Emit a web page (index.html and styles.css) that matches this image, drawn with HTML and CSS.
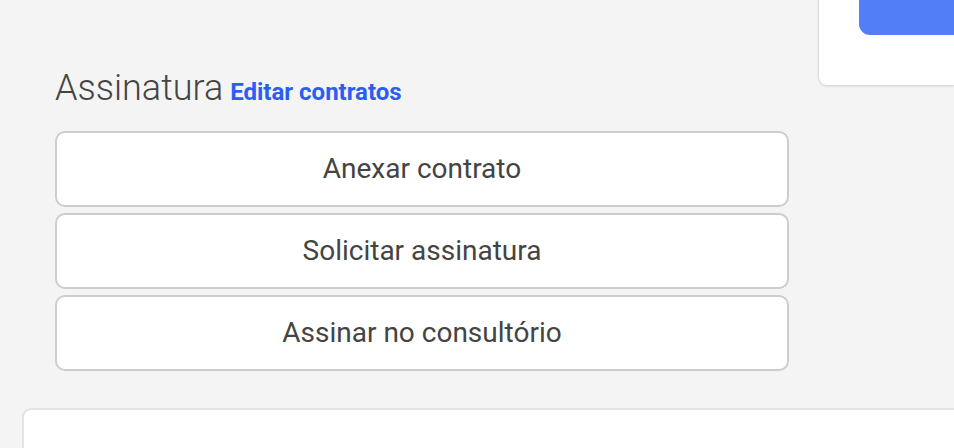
FILE: index.html
```html
<!DOCTYPE html>
<html lang="pt">
<head>
<meta charset="utf-8">
<link rel="stylesheet" href="styles.css">
</head>
<body>
<div class="top-row">
  <section class="main">
    <h2 class="heading"><span class="title">Assinatura</span> <a class="edit-link" href="#">Editar contratos</a></h2>
    <div class="actions">
      <button class="action">Anexar contrato</button>
      <button class="action">Solicitar assinatura</button>
      <button class="action">Assinar no consultório</button>
    </div>
  </section>
  <aside class="side">
    <div class="side-card">
      <div class="primary-btn"></div>
    </div>
  </aside>
</div>
<div class="bottom-card"></div>
</body>
</html>
```

FILE: styles.css
```css
html, body {
  margin: 0;
  padding: 0;
  background: #f4f4f4;
  font-family: Roboto, "Liberation Sans", sans-serif;
  overflow: hidden;
  height: 448px;
}

.top-row {
  display: flex;
  align-items: flex-start;
}

.main {
  margin-left: 55px;
  width: 734px;
  padding-top: 68px;
  flex: none;
}

.heading {
  margin: 0 0 23px 0;
  height: 40px;
  line-height: 40px;
  font-weight: normal;
  white-space: nowrap;
}

.title {
  font-size: 36px;
  font-weight: 300;
  color: #444444;
}

.edit-link {
  font-size: 24px;
  font-weight: 700;
  color: #2b5df4;
  text-decoration: none;
  margin-left: 1px;
}

.actions {
  display: flex;
  flex-direction: column;
  gap: 6px;
}

.action {
  box-sizing: border-box;
  height: 76px;
  width: 100%;
  background: #ffffff;
  border: 2px solid #cdcdcd;
  border-radius: 10px;
  font-family: Roboto, "Liberation Sans", sans-serif;
  font-size: 28px;
  color: #444444;
  display: flex;
  align-items: center;
  justify-content: center;
  padding: 0 0 2px 0;
}

.side {
  flex: 1;
  margin-left: 29px;
}

.side-card {
  box-sizing: border-box;
  margin-top: -40px;
  height: 126px;
  background: #ffffff;
  border: 1px solid #dcdcdc;
  border-right: none;
  border-radius: 0 0 0 9px;
  box-shadow: 0 1px 2px rgba(0, 0, 0, 0.08);
  padding-left: 40px;
}

.primary-btn {
  height: 74px;
  background: #527ff7;
  border-radius: 0 0 0 11px;
}

.bottom-card {
  box-sizing: border-box;
  margin-top: 37px;
  margin-left: 22px;
  height: 40px;
  background: #ffffff;
  border: 2px solid #e3e3e3;
  border-right: none;
  border-bottom: none;
  border-radius: 9px 0 0 0;
}
```
